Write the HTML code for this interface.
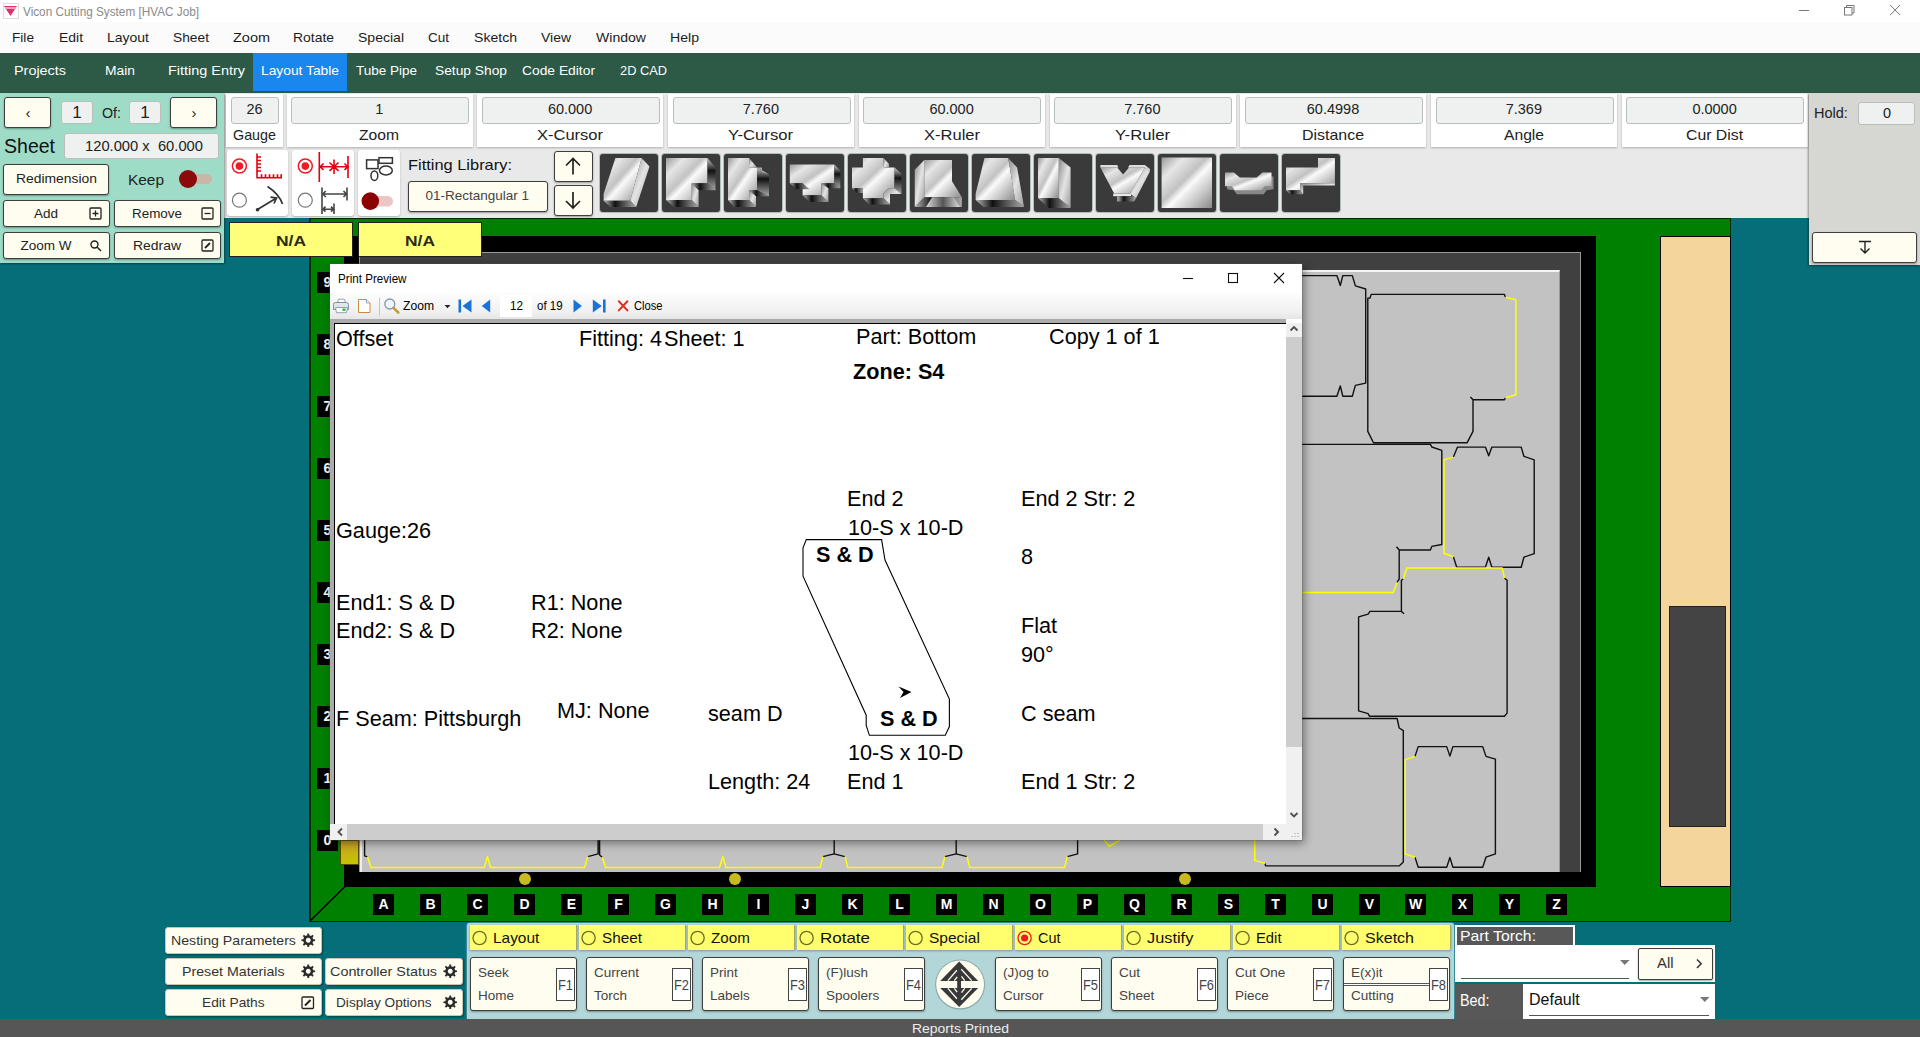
<!DOCTYPE html>
<html lang="en"><head><meta charset="utf-8"><title>Vicon Cutting System [HVAC Job]</title>
<style>
html,body{margin:0;padding:0}
body{width:1920px;height:1037px;position:relative;overflow:hidden;background:#056e78;font-family:"Liberation Sans",sans-serif;color:#222}
div,span.t,svg{position:absolute;box-sizing:border-box}
span.t{white-space:pre;transform-origin:0 50%}
.btn{background:#fffdf0;border:1px solid #3e3e3e;border-radius:3px;box-shadow:0 1px 2px rgba(0,0,0,.35)}
.b2{border-color:#c9c6b4;box-shadow:1px 1px 2px rgba(0,0,0,.4)}
.val{background:#eef1f0;border:1px solid #b9bfbd;border-radius:3px}
.wp{background:#fff;box-shadow:0 1px 2px rgba(0,0,0,.25)}
.fit{background:#3a3a3a;border-radius:3px;box-shadow:0 0 0 1px rgba(150,170,165,.7)}
.lbl{background:#000}
.yl{background:#ffff66}

</style></head>
<body>
<div style="left:0px;top:0px;width:1920px;height:22px;background:#fff"></div>
<svg style="left:3px;top:3px" width="16" height="16" viewBox="0 0 16 16"><rect x="0.5" y="0.5" width="15" height="15" fill="#fff" stroke="#ddd"/><path d="M1 3h13l-6.5 10z" fill="#e0306a"/><rect x="2" y="4" width="11" height="2" fill="#f7a0bd"/></svg>
<span class="t" style="left:23.0px;top:5.0px;font-size:12px;line-height:14px;transform:scaleX(0.980);color:#8a8a8a;">Vicon Cutting System [HVAC Job]</span>
<svg style="left:1790px;top:0" width="130" height="22" viewBox="0 0 130 22" fill="none" stroke="#777" stroke-width="1"><path d="M9 10.500h10"/><rect x="54.500" y="7.500" width="7.500" height="7.500"/><path d="M56.500 7.500v-2h7.500v7.500h-2"/><path d="M100.200 5l9.800 10M110 5l-9.800 10"/></svg>
<div style="left:0px;top:22px;width:1920px;height:31px;background:#fbfbfb"></div>
<span class="t" style="left:12.0px;top:29.8px;font-size:13.5px;line-height:16px;transform:scaleX(1.011);color:#1c1c1c;">File</span>
<span class="t" style="left:59.0px;top:29.8px;font-size:13.5px;line-height:16px;transform:scaleX(1.032);color:#1c1c1c;">Edit</span>
<span class="t" style="left:107.0px;top:29.8px;font-size:13.5px;line-height:16px;transform:scaleX(1.036);color:#1c1c1c;">Layout</span>
<span class="t" style="left:173.0px;top:29.8px;font-size:13.5px;line-height:16px;transform:scaleX(1.020);color:#1c1c1c;">Sheet</span>
<span class="t" style="left:233.0px;top:29.8px;font-size:13.5px;line-height:16px;transform:scaleX(1.072);color:#1c1c1c;">Zoom</span>
<span class="t" style="left:293.0px;top:29.8px;font-size:13.5px;line-height:16px;transform:scaleX(1.031);color:#1c1c1c;">Rotate</span>
<span class="t" style="left:358.0px;top:29.8px;font-size:13.5px;line-height:16px;transform:scaleX(1.039);color:#1c1c1c;">Special</span>
<span class="t" style="left:428.0px;top:29.8px;font-size:13.5px;line-height:16px;color:#1c1c1c;">Cut</span>
<span class="t" style="left:474.0px;top:29.8px;font-size:13.5px;line-height:16px;transform:scaleX(1.042);color:#1c1c1c;">Sketch</span>
<span class="t" style="left:541.0px;top:29.8px;font-size:13.5px;line-height:16px;transform:scaleX(1.034);color:#1c1c1c;">View</span>
<span class="t" style="left:596.0px;top:29.8px;font-size:13.5px;line-height:16px;transform:scaleX(1.041);color:#1c1c1c;">Window</span>
<span class="t" style="left:670.0px;top:29.8px;font-size:13.5px;line-height:16px;transform:scaleX(1.045);color:#1c1c1c;">Help</span>
<div style="left:0px;top:53px;width:1920px;height:40px;background:#2d5947"></div>
<div style="left:253px;top:53px;width:94px;height:38px;background:#1a87ee"></div>
<span class="t" style="left:14.0px;top:63.2px;font-size:13.5px;line-height:16px;transform:scaleX(1.066);color:#fff;">Projects</span>
<span class="t" style="left:105.0px;top:63.2px;font-size:13.5px;line-height:16px;transform:scaleX(1.025);color:#fff;">Main</span>
<span class="t" style="left:168.0px;top:63.2px;font-size:13.5px;line-height:16px;transform:scaleX(1.069);color:#fff;">Fitting Entry</span>
<span class="t" style="left:261.0px;top:63.2px;font-size:13.5px;line-height:16px;transform:scaleX(1.022);color:#fff;">Layout Table</span>
<span class="t" style="left:356.0px;top:63.2px;font-size:13.5px;line-height:16px;color:#fff;">Tube Pipe</span>
<span class="t" style="left:435.0px;top:63.2px;font-size:13.5px;line-height:16px;transform:scaleX(1.020);color:#fff;">Setup Shop</span>
<span class="t" style="left:522.0px;top:63.2px;font-size:13.5px;line-height:16px;transform:scaleX(1.024);color:#fff;">Code Editor</span>
<span class="t" style="left:620.0px;top:63.2px;font-size:13.5px;line-height:16px;transform:scaleX(0.949);color:#fff;">2D CAD</span>
<div style="left:223px;top:93px;width:1587px;height:125px;background:#e9e9e9"></div>
<div style="left:0px;top:93px;width:224px;height:170px;background:#9edcc8;box-shadow:1px 1px 2px rgba(0,0,0,.4)"></div>
<div class="btn" style="left:4px;top:97px;width:47px;height:31px;"></div>
<span class="t" style="left:25.5px;top:104.0px;font-size:15px;line-height:18px;">‹</span>
<div class="btn" style="left:170px;top:97px;width:47px;height:31px;"></div>
<span class="t" style="left:191.5px;top:104.0px;font-size:15px;line-height:18px;">›</span>
<div class="val" style="left:61px;top:101px;width:32px;height:23px;"></div>
<span class="t" style="left:72.3px;top:103.0px;font-size:17px;line-height:20px;">1</span>
<div class="val" style="left:129px;top:101px;width:32px;height:23px;"></div>
<span class="t" style="left:140.3px;top:103.0px;font-size:17px;line-height:20px;">1</span>
<span class="t" style="left:102.0px;top:104.5px;font-size:14.5px;line-height:17px;transform:scaleX(0.983);">Of:</span>
<span class="t" style="left:4.0px;top:134.0px;font-size:20px;line-height:24px;transform:scaleX(0.976);color:#111;">Sheet</span>
<div class="val" style="left:64px;top:133px;width:155px;height:26px;"></div>
<span class="t" style="left:85.0px;top:137.5px;font-size:14.5px;line-height:17px;transform:scaleX(1.016);">120.000 x  60.000</span>
<div class="btn" style="left:3px;top:164px;width:106px;height:31px;"></div>
<span class="t" style="left:15.5px;top:171.0px;font-size:13.5px;line-height:16px;transform:scaleX(1.028);">Redimension</span>
<span class="t" style="left:128.0px;top:171.0px;font-size:15px;line-height:18px;transform:scaleX(1.028);">Keep</span>
<div style="left:191px;top:174px;width:21px;height:10px;background:#c9b6a6;border-radius:5px"></div>
<div style="left:179px;top:170px;width:18px;height:18px;background:#8b0a0a;border-radius:9px"></div>
<div class="btn" style="left:3px;top:200px;width:107px;height:27px;"></div>
<span class="t" style="left:34.0px;top:206.0px;font-size:13.5px;line-height:16px;">Add</span>
<div class="btn" style="left:114px;top:200px;width:107px;height:27px;"></div>
<span class="t" style="left:132.0px;top:206.0px;font-size:13.5px;line-height:16px;transform:scaleX(0.995);">Remove</span>
<div class="btn" style="left:3px;top:232px;width:107px;height:27px;"></div>
<span class="t" style="left:20.5px;top:238.0px;font-size:13.5px;line-height:16px;">Zoom W</span>
<div class="btn" style="left:114px;top:232px;width:107px;height:27px;"></div>
<span class="t" style="left:133.0px;top:238.0px;font-size:13.5px;line-height:16px;transform:scaleX(1.032);">Redraw</span>
<svg style="left:88px;top:206px" width="16" height="16" fill="none" stroke="#222" stroke-width="1.3"><rect x="2" y="2" width="11" height="11" rx="1"/><path d="M7.5 4.5v6M4.5 7.5h6"/></svg>
<svg style="left:200px;top:206px" width="16" height="16" fill="none" stroke="#222" stroke-width="1.3"><rect x="2" y="2" width="11" height="11" rx="1"/><path d="M4.5 7.5h6"/></svg>
<svg style="left:88px;top:238px" width="16" height="16" fill="none" stroke="#222" stroke-width="1.4"><circle cx="6.5" cy="6.5" r="3.5"/><path d="M9 9l4 4"/></svg>
<svg style="left:200px;top:238px" width="16" height="16" fill="none" stroke="#222" stroke-width="1.3"><rect x="2" y="2" width="11" height="11" rx="1"/><path d="M5 10l5-5" stroke-width="1.8"/></svg>
<div class="wp" style="left:226px;top:94px;width:57px;height:52.5px;"></div>
<div class="val" style="left:230.5px;top:97px;width:48px;height:26.5px;"></div>
<span class="t" style="left:246.4px;top:101.1px;font-size:14.5px;line-height:17px;">26</span>
<span class="t" style="left:233.0px;top:126.5px;font-size:14.5px;line-height:17px;transform:scaleX(0.988);">Gauge</span>
<div class="wp" style="left:286.5px;top:94px;width:186px;height:52.5px;"></div>
<div class="val" style="left:291.0px;top:97px;width:178px;height:26.5px;"></div>
<span class="t" style="left:375.3px;top:101.1px;font-size:14.5px;line-height:17px;">1</span>
<span class="t" style="left:359.3px;top:126.5px;font-size:14.5px;line-height:17px;transform:scaleX(1.079);">Zoom</span>
<div class="wp" style="left:477.0px;top:94px;width:186px;height:52.5px;"></div>
<div class="val" style="left:481.5px;top:97px;width:178px;height:26.5px;"></div>
<span class="t" style="left:547.9px;top:101.1px;font-size:14.5px;line-height:17px;">60.000</span>
<span class="t" style="left:537.0px;top:126.5px;font-size:14.5px;line-height:17px;transform:scaleX(1.138);">X-Cursor</span>
<div class="wp" style="left:668.0px;top:94px;width:186px;height:52.5px;"></div>
<div class="val" style="left:672.5px;top:97px;width:178px;height:26.5px;"></div>
<span class="t" style="left:742.7px;top:101.1px;font-size:14.5px;line-height:17px;">7.760</span>
<span class="t" style="left:728.3px;top:126.5px;font-size:14.5px;line-height:17px;transform:scaleX(1.147);">Y-Cursor</span>
<div class="wp" style="left:858.5px;top:94px;width:186px;height:52.5px;"></div>
<div class="val" style="left:863.0px;top:97px;width:178px;height:26.5px;"></div>
<span class="t" style="left:929.4px;top:101.1px;font-size:14.5px;line-height:17px;">60.000</span>
<span class="t" style="left:923.5px;top:126.5px;font-size:14.5px;line-height:17px;transform:scaleX(1.139);">X-Ruler</span>
<div class="wp" style="left:1049.5px;top:94px;width:186px;height:52.5px;"></div>
<div class="val" style="left:1054.0px;top:97px;width:178px;height:26.5px;"></div>
<span class="t" style="left:1124.2px;top:101.1px;font-size:14.5px;line-height:17px;">7.760</span>
<span class="t" style="left:1114.8px;top:126.5px;font-size:14.5px;line-height:17px;transform:scaleX(1.150);">Y-Ruler</span>
<div class="wp" style="left:1240.0px;top:94px;width:186px;height:52.5px;"></div>
<div class="val" style="left:1244.5px;top:97px;width:178px;height:26.5px;"></div>
<span class="t" style="left:1306.8px;top:101.1px;font-size:14.5px;line-height:17px;">60.4998</span>
<span class="t" style="left:1302.0px;top:126.5px;font-size:14.5px;line-height:17px;transform:scaleX(1.099);">Distance</span>
<div class="wp" style="left:1431.0px;top:94px;width:186px;height:52.5px;"></div>
<div class="val" style="left:1435.5px;top:97px;width:178px;height:26.5px;"></div>
<span class="t" style="left:1505.7px;top:101.1px;font-size:14.5px;line-height:17px;">7.369</span>
<span class="t" style="left:1503.8px;top:126.5px;font-size:14.5px;line-height:17px;transform:scaleX(1.079);">Angle</span>
<div class="wp" style="left:1621.5px;top:94px;width:186px;height:52.5px;"></div>
<div class="val" style="left:1626.0px;top:97px;width:178px;height:26.5px;"></div>
<span class="t" style="left:1692.4px;top:101.1px;font-size:14.5px;line-height:17px;">0.0000</span>
<span class="t" style="left:1686.0px;top:126.5px;font-size:14.5px;line-height:17px;transform:scaleX(1.089);">Cur Dist</span>
<div style="left:1809px;top:93px;width:111px;height:172px;background:#d6d6d3;box-shadow:-1px 1px 2px rgba(0,0,0,.4)"></div>
<span class="t" style="left:1814.0px;top:104.5px;font-size:14.5px;line-height:17px;">Hold:</span>
<div class="val" style="left:1858px;top:102px;width:57px;height:23px;"></div>
<span class="t" style="left:1883.0px;top:104.5px;font-size:14.5px;line-height:17px;">0</span>
<div class="btn" style="left:1812px;top:232px;width:105px;height:31px;"></div>
<svg style="left:1856px;top:239px" width="18" height="18" fill="none" stroke="#222" stroke-width="1.4"><path d="M3 2.5h12M9 2.5v11M4.5 9.5l4.5 4.5 4.5-4.5"/></svg>
<div class="wp" style="left:227px;top:150px;width:61px;height:66px;border-radius:3px"></div>
<div class="wp" style="left:292px;top:150px;width:62px;height:66px;border-radius:3px"></div>
<div class="wp" style="left:358px;top:150px;width:42px;height:66px;border-radius:3px"></div>
<svg style="left:224px;top:148px" width="180" height="72" viewBox="0 0 180 72" fill="none">
<g stroke="#ed1c24" stroke-width="1.5"><circle cx="15.4" cy="18.1" r="7"/><circle cx="81.3" cy="18.1" r="7"/></g>
<circle cx="15.4" cy="18.1" r="3.8" fill="#ed1c24"/><circle cx="81.3" cy="18.1" r="3.8" fill="#ed1c24"/>
<g stroke="#777" stroke-width="1.2"><circle cx="15.4" cy="52.2" r="7"/><circle cx="81.3" cy="52.2" r="7"/></g>
<g stroke="#e3000f" stroke-width="1.6"><path d="M33 5.5V30.5M32.2 29.7H58"/><path d="M33 9h4M33 12.5h4M33 16h4M33 19.5h4M33 23h4M37.5 29.7v-3.5M41.5 29.7v-3.5M45.5 29.7v-3.5M49.5 29.7v-3.5M53.5 29.7v-3.5M57.2 29.7v-3.5" stroke-width="1.7"/></g>
<g stroke="#333" stroke-width="1.7"><path d="M43.5 38.5Q55 46 58.5 56"/><path d="M33.5 61.5L52.5 50M46.5 49.2l6 .8-2.5 5.5"/></g><circle cx="33.5" cy="61.8" r="1.8" fill="#333"/>
<g stroke="#e3000f" stroke-width="1.6"><path d="M95.3 4v30M124 8v22"/><path d="M96 18.7h28M99.5 15.5l-3.3 3.2 3.3 3.2M120.5 15.5l3.3 3.2-3.3 3.2M110 11.5v14.5M105.5 14.5l9 8.4M114.5 14.5l-9 8.4" stroke-width="1.6"/></g>
<g stroke="#444" stroke-width="1.6"><path d="M98 39.5V66M123 39.5v13M110 55.5V66"/><path d="M98.5 46h24M101.8 43l-3 3 3 3M119.5 43l3 3-3 3M98.5 61.2h11M101.5 58.7l-2.6 2.5 2.6 2.5M107 58.7l2.6 2.5-2.6 2.5" stroke-width="1.6"/></g>
<g stroke="#333" stroke-width="1.5"><rect x="142.6" y="11.9" width="11.4" height="8.7"/><rect x="155" y="9.7" width="13.4" height="5.6"/><ellipse cx="161.9" cy="22.5" rx="6.4" ry="4.4"/><ellipse cx="150.4" cy="27.7" rx="3.4" ry="4.8"/></g>
<rect x="146" y="48" width="23" height="10.5" rx="5.2" fill="#ecc5c5"/><circle cx="146.3" cy="53.1" r="8.8" fill="#8b0000"/>
</svg>
<span class="t" style="left:408.0px;top:156.0px;font-size:15px;line-height:18px;transform:scaleX(1.094);color:#111;">Fitting Library:</span>
<div class="btn" style="left:408px;top:180.5px;width:139.5px;height:31px;"></div>
<span class="t" style="left:425.5px;top:188.0px;font-size:13.5px;line-height:16px;color:#444;">01-Rectangular 1</span>
<div class="btn" style="left:553.5px;top:150.5px;width:39px;height:31px;"></div>
<div class="btn" style="left:553.5px;top:184.5px;width:39px;height:31px;"></div>
<svg style="left:554px;top:152px" width="38" height="62" fill="none" stroke="#222" stroke-width="1.7"><path d="M19 6.500v16M12 13.500l7-7 7 7M19 40v16M12 49l7 7 7-7"/></svg>
<svg width="0" height="0"><defs>
<linearGradient id="gm" x1="0" y1="0" x2="1" y2="1"><stop offset="0" stop-color="#9a9a9a"/><stop offset=".22" stop-color="#e6e6e6"/><stop offset=".45" stop-color="#c2c2c2"/><stop offset=".55" stop-color="#fafafa"/><stop offset=".72" stop-color="#d0d0d0"/><stop offset="1" stop-color="#8a8a8a"/></linearGradient>
<linearGradient id="gs" x1="0" y1="0" x2="1" y2="1"><stop offset="0" stop-color="#8a8a8a"/><stop offset=".5" stop-color="#e4e4e4"/><stop offset="1" stop-color="#9a9a9a"/></linearGradient>
<linearGradient id="gs2" x1="0" y1="0" x2="1" y2="0"><stop offset="0" stop-color="#ddd"/><stop offset=".5" stop-color="#555"/><stop offset="1" stop-color="#ddd"/></linearGradient>
<linearGradient id="gd" x1="0" y1="0" x2="1" y2="0"><stop offset="0" stop-color="#bbb"/><stop offset=".35" stop-color="#111"/><stop offset="1" stop-color="#aaa"/></linearGradient>
<linearGradient id="gd2" x1="0" y1="0" x2="0" y2="1"><stop offset="0" stop-color="#ccc"/><stop offset=".4" stop-color="#111"/><stop offset="1" stop-color="#aaa"/></linearGradient>
</defs></svg>
<div class="fit" style="left:600px;top:154px;width:58px;height:58px;"></div>
<svg style="left:600px;top:154px" width="58" height="58" viewBox="0 0 58 58"><polygon points="15.4,4 41.6,4 30.3,46.7 3.6,46.7 3.6,40" fill="url(#gm)"/><polygon points="41.6,4 49.5,12.5 36.2,53 30.3,46.7" fill="url(#gs)"/><polygon points="3.6,46.7 30.3,46.7 36.2,53 10.5,53" fill="url(#gd)"/></svg>
<div class="fit" style="left:662px;top:154px;width:58px;height:58px;"></div>
<svg style="left:662px;top:154px" width="58" height="58" viewBox="0 0 58 58"><polygon points="4,4 45.5,4 45.5,29.3 29.7,29.3 29.7,46.1 4,46.1" fill="url(#gm)"/><polygon points="45.5,4 53.5,13.5 53.5,36.2 45.5,29.3" fill="url(#gd2)"/><polygon points="29.7,29.3 45.5,29.3 53.5,36.2 36.6,36.2" fill="url(#gd)"/><polygon points="29.7,29.3 36.6,36.2 36.6,53 29.7,46.1" fill="url(#gs)"/><polygon points="4,46.1 29.7,46.1 36.6,53 11.9,53" fill="url(#gd)"/></svg>
<div class="fit" style="left:724px;top:154px;width:58px;height:58px;"></div>
<svg style="left:724px;top:154px" width="58" height="58" viewBox="0 0 58 58"><polygon points="4,4 25.1,4 25.1,13.5 33.1,13.5 33.1,36.2 25.1,36.2 25.1,46.1 4,46.1" fill="url(#gm)"/><polygon points="25.1,4 33,13.5 25.1,13.5" fill="url(#gs)"/><polygon points="33.1,13.5 45,20.4 45,42.2 33.1,36.2" fill="url(#gd2)"/><polygon points="33.1,13.5 38,13.5 38,18 45,20.4" fill="#aaa"/><polygon points="25.1,36.2 33.1,36.2 45,42.2 32,42.2" fill="url(#gd)"/><polygon points="25.1,36.2 32,42.2 32,53 25.1,46.1" fill="url(#gs)"/><polygon points="4,46.1 25.1,46.1 32,53 10,53" fill="url(#gd)"/></svg>
<div class="fit" style="left:786px;top:154px;width:58px;height:58px;"></div>
<svg style="left:786px;top:154px" width="58" height="58" viewBox="0 0 58 58"><polygon points="3.8,10.5 48.3,10.5 48.3,29.3 35.4,29.3 35.4,41.2 16.6,41.2 16.6,29.3 3.8,29.3" fill="url(#gm)"/><polygon points="48.3,10.5 54.3,16.4 54.3,34.3 48.3,29.3" fill="url(#gd2)"/><polygon points="3.8,29.3 16.6,29.3 23.6,35.2 10.7,35.2" fill="url(#gd)"/><polygon points="35.4,29.3 48.3,29.3 54.3,34.3 42.4,34.3" fill="url(#gd)"/><polygon points="35.4,29.3 42.4,34.3 42.4,48.1 35.4,41.2" fill="url(#gs)"/><polygon points="16.6,41.2 35.4,41.2 42.4,48.1 23.6,48.1" fill="url(#gd)"/></svg>
<div class="fit" style="left:848px;top:154px;width:58px;height:58px;"></div>
<svg style="left:848px;top:154px" width="58" height="58" viewBox="0 0 58 58"><polygon points="14.9,4 35.6,4 35.6,13.5 46.5,13.5 46.5,34.3 40.5,34.3 35.6,39 35.6,44.2 14.9,44.2 14.9,34.3 4,34.3 4,13.5 14.9,13.5" fill="url(#gm)"/><polygon points="35.6,4 41,10 41,13.5 35.6,13.5" fill="url(#gs)"/><polygon points="46.5,13.5 53.5,19.8 53.5,40 46.5,34.3" fill="url(#gd2)"/><polygon points="40.5,34.3 46.5,34.3 53.5,40 42,40 42,50.5 35.6,44.2 35.6,39" fill="url(#gs)"/><polygon points="14.9,44.2 35.6,44.2 42,50.5 21,50.5" fill="url(#gd)"/><polygon points="4,34.3 14.9,34.3 14.9,39 9,39" fill="url(#gd)"/></svg>
<div class="fit" style="left:910px;top:154px;width:58px;height:58px;"></div>
<svg style="left:910px;top:154px" width="58" height="58" viewBox="0 0 58 58"><polygon points="14.3,6 42,6 42,27.3 51.9,43.2 14.3,43.2" fill="url(#gm)"/><polygon points="4.75,15.8 14.3,6 14.3,43.2 4.75,53" fill="url(#gs)"/><polygon points="4.75,53 14.3,43.2 51.9,43.2 51.9,53" fill="url(#gd)"/><polygon points="22,43.2 44,43.2 50,53 16,53" fill="url(#gs2)"/></svg>
<div class="fit" style="left:972px;top:154px;width:58px;height:58px;"></div>
<svg style="left:972px;top:154px" width="58" height="58" viewBox="0 0 58 58"><polygon points="12.5,4 36.2,4 43.2,46.1 3.6,46.1 3.6,40" fill="url(#gm)"/><polygon points="36.2,4 45.1,13.5 52.1,53 43.2,46.1" fill="url(#gs)"/><polygon points="3.6,46.1 43.2,46.1 52.1,53 11.5,53" fill="url(#gd)"/></svg>
<div class="fit" style="left:1034px;top:154px;width:58px;height:58px;"></div>
<svg style="left:1034px;top:154px" width="58" height="58" viewBox="0 0 58 58"><polygon points="4,4 24.8,4 24.8,44.2 4,44.2" fill="url(#gm)"/><polygon points="24.8,4 36.6,13.5 36.6,54 24.8,44.2" fill="url(#gs)"/><polygon points="4,44.2 24.8,44.2 36.6,54 14.9,54" fill="url(#gd)"/></svg>
<div class="fit" style="left:1096px;top:154px;width:58px;height:58px;"></div>
<svg style="left:1096px;top:154px" width="58" height="58" viewBox="0 0 58 58"><polygon points="4.4,13.5 21.2,13.5 27.1,20.4 33.1,13.5 48.9,13.5 34.1,39.6 18.2,39.6" fill="url(#gm)"/><polygon points="4.4,11 21.2,11 22.5,13.5 4.4,13.5" fill="#ddd"/><polygon points="32,13.5 33.5,11 48.9,11 53.9,15 53.9,17.4 48.9,13.5" fill="#ddd"/><polygon points="48.9,13.5 53.9,17.4 40,44.2 34.1,39.6" fill="url(#gs)"/><polygon points="17.2,39.6 35,39.6 35,42.2 17.2,42.2" fill="#e8e8e8"/><polygon points="21.2,42.2 38,42.2 40,44.2 38,47.5 21.2,47.5" fill="url(#gd)"/></svg>
<div class="fit" style="left:1158px;top:154px;width:58px;height:58px;"></div>
<svg style="left:1158px;top:154px" width="58" height="58" viewBox="0 0 58 58"><polygon points="3.6,3.6 54,3.6 54,54 3.6,54" fill="url(#gm)"/></svg>
<div class="fit" style="left:1220px;top:154px;width:58px;height:58px;"></div>
<svg style="left:1220px;top:154px" width="58" height="58" viewBox="0 0 58 58"><polygon points="7,22.4 15.9,22.4 21.8,27.4 38.6,27.4 44.6,22.4 53.5,22.4 53.5,35.3 46.6,36.3 43.6,40.2 16.9,40.2 13.9,36.3 7,35.3" fill="#888"/><polygon points="5,18.4 13.9,18.4 19.8,23.4 36.6,23.4 42.6,18.4 51.5,18.4 51.5,32.3 44.6,32.3 41.6,36.2 14.9,36.2 11.9,32.3 5,32.3" fill="url(#gm)"/></svg>
<div class="fit" style="left:1282px;top:154px;width:58px;height:58px;"></div>
<svg style="left:1282px;top:154px" width="58" height="58" viewBox="0 0 58 58"><polygon points="36,4 52.9,4 52.9,29.3 18.2,29.3 18.2,36.2 4,36.2 4,13.5 36,13.5" fill="url(#gm)"/><polygon points="18.2,29.3 52.9,29.3 52.9,31.5 21.2,31.5 21.2,40.2 18.2,36.2" fill="url(#gs)"/><polygon points="4,36.2 18.2,36.2 21.2,40.2 7.5,40.2" fill="url(#gd)"/></svg>
<div style="left:309px;top:218px;width:1422px;height:704px;background:#008000;border:1px solid #002a00;border-left-width:2px"></div>
<svg style="left:309px;top:884px" width="40" height="40"><path d="M1.5 36.5L36 2.5" stroke="#000" stroke-width="1.6"/></svg>
<div style="left:344px;top:236px;width:1252px;height:651px;background:#000"></div>
<div style="left:359px;top:252px;width:1222px;height:620px;background:#404040;border:1px solid #9a9a9a;border-bottom:none"></div>
<div style="left:360px;top:270px;width:1200px;height:602px;background:#c2c2c2;border-top:2px solid #f4f4f4;border-left:2px solid #eee;border-right:1px solid #999"></div>
<div style="left:1660px;top:236px;width:71px;height:651px;background:#f4d69c;border:1px solid #000"></div>
<div style="left:1669px;top:606px;width:57px;height:221px;background:#444;border:1px solid #222"></div>
<div style="left:228.5px;top:222px;width:124.5px;height:35px;background:#ffff7a;border:1px solid #222"></div>
<span class="t" style="left:275.7px;top:231.6px;font-size:15px;line-height:18px;transform:scaleX(1.161);color:#2a2a10;font-weight:bold;">N/A</span>
<div style="left:357.5px;top:222px;width:124.5px;height:35px;background:#ffff7a;border:1px solid #222"></div>
<span class="t" style="left:404.7px;top:231.6px;font-size:15px;line-height:18px;transform:scaleX(1.161);color:#2a2a10;font-weight:bold;">N/A</span>
<div class="lbl" style="left:317px;top:272px;width:21px;height:21px;"></div>
<span class="t" style="left:323.6px;top:274.0px;font-size:14px;line-height:17px;color:#fff;font-weight:bold;">9</span>
<div class="lbl" style="left:317px;top:334px;width:21px;height:21px;"></div>
<span class="t" style="left:323.6px;top:336.0px;font-size:14px;line-height:17px;color:#fff;font-weight:bold;">8</span>
<div class="lbl" style="left:317px;top:396px;width:21px;height:21px;"></div>
<span class="t" style="left:323.6px;top:398.0px;font-size:14px;line-height:17px;color:#fff;font-weight:bold;">7</span>
<div class="lbl" style="left:317px;top:458px;width:21px;height:21px;"></div>
<span class="t" style="left:323.6px;top:460.0px;font-size:14px;line-height:17px;color:#fff;font-weight:bold;">6</span>
<div class="lbl" style="left:317px;top:520px;width:21px;height:21px;"></div>
<span class="t" style="left:323.6px;top:522.0px;font-size:14px;line-height:17px;color:#fff;font-weight:bold;">5</span>
<div class="lbl" style="left:317px;top:582px;width:21px;height:21px;"></div>
<span class="t" style="left:323.6px;top:584.0px;font-size:14px;line-height:17px;color:#fff;font-weight:bold;">4</span>
<div class="lbl" style="left:317px;top:644px;width:21px;height:21px;"></div>
<span class="t" style="left:323.6px;top:646.0px;font-size:14px;line-height:17px;color:#fff;font-weight:bold;">3</span>
<div class="lbl" style="left:317px;top:706px;width:21px;height:21px;"></div>
<span class="t" style="left:323.6px;top:708.0px;font-size:14px;line-height:17px;color:#fff;font-weight:bold;">2</span>
<div class="lbl" style="left:317px;top:768px;width:21px;height:21px;"></div>
<span class="t" style="left:323.6px;top:770.0px;font-size:14px;line-height:17px;color:#fff;font-weight:bold;">1</span>
<div class="lbl" style="left:317px;top:830px;width:21px;height:21px;"></div>
<span class="t" style="left:323.6px;top:832.0px;font-size:14px;line-height:17px;color:#fff;font-weight:bold;">0</span>
<div class="lbl" style="left:373px;top:893.5px;width:21px;height:21px;"></div>
<span class="t" style="left:378.4px;top:895.5px;font-size:14px;line-height:17px;color:#fff;font-weight:bold;">A</span>
<div class="lbl" style="left:420px;top:893.5px;width:21px;height:21px;"></div>
<span class="t" style="left:425.4px;top:895.5px;font-size:14px;line-height:17px;color:#fff;font-weight:bold;">B</span>
<div class="lbl" style="left:467px;top:893.5px;width:21px;height:21px;"></div>
<span class="t" style="left:472.4px;top:895.5px;font-size:14px;line-height:17px;color:#fff;font-weight:bold;">C</span>
<div class="lbl" style="left:514px;top:893.5px;width:21px;height:21px;"></div>
<span class="t" style="left:519.4px;top:895.5px;font-size:14px;line-height:17px;color:#fff;font-weight:bold;">D</span>
<div class="lbl" style="left:561px;top:893.5px;width:21px;height:21px;"></div>
<span class="t" style="left:566.8px;top:895.5px;font-size:14px;line-height:17px;color:#fff;font-weight:bold;">E</span>
<div class="lbl" style="left:608px;top:893.5px;width:21px;height:21px;"></div>
<span class="t" style="left:614.2px;top:895.5px;font-size:14px;line-height:17px;color:#fff;font-weight:bold;">F</span>
<div class="lbl" style="left:655px;top:893.5px;width:21px;height:21px;"></div>
<span class="t" style="left:660.1px;top:895.5px;font-size:14px;line-height:17px;color:#fff;font-weight:bold;">G</span>
<div class="lbl" style="left:702px;top:893.5px;width:21px;height:21px;"></div>
<span class="t" style="left:707.4px;top:895.5px;font-size:14px;line-height:17px;color:#fff;font-weight:bold;">H</span>
<div class="lbl" style="left:748px;top:893.5px;width:21px;height:21px;"></div>
<span class="t" style="left:756.6px;top:895.5px;font-size:14px;line-height:17px;color:#fff;font-weight:bold;">I</span>
<div class="lbl" style="left:795px;top:893.5px;width:21px;height:21px;"></div>
<span class="t" style="left:801.6px;top:895.5px;font-size:14px;line-height:17px;color:#fff;font-weight:bold;">J</span>
<div class="lbl" style="left:842px;top:893.5px;width:21px;height:21px;"></div>
<span class="t" style="left:847.4px;top:895.5px;font-size:14px;line-height:17px;color:#fff;font-weight:bold;">K</span>
<div class="lbl" style="left:889px;top:893.5px;width:21px;height:21px;"></div>
<span class="t" style="left:895.2px;top:895.5px;font-size:14px;line-height:17px;color:#fff;font-weight:bold;">L</span>
<div class="lbl" style="left:936px;top:893.5px;width:21px;height:21px;"></div>
<span class="t" style="left:940.7px;top:895.5px;font-size:14px;line-height:17px;color:#fff;font-weight:bold;">M</span>
<div class="lbl" style="left:983px;top:893.5px;width:21px;height:21px;"></div>
<span class="t" style="left:988.4px;top:895.5px;font-size:14px;line-height:17px;color:#fff;font-weight:bold;">N</span>
<div class="lbl" style="left:1030px;top:893.5px;width:21px;height:21px;"></div>
<span class="t" style="left:1035.1px;top:895.5px;font-size:14px;line-height:17px;color:#fff;font-weight:bold;">O</span>
<div class="lbl" style="left:1077px;top:893.5px;width:21px;height:21px;"></div>
<span class="t" style="left:1082.8px;top:895.5px;font-size:14px;line-height:17px;color:#fff;font-weight:bold;">P</span>
<div class="lbl" style="left:1124px;top:893.5px;width:21px;height:21px;"></div>
<span class="t" style="left:1129.1px;top:895.5px;font-size:14px;line-height:17px;color:#fff;font-weight:bold;">Q</span>
<div class="lbl" style="left:1171px;top:893.5px;width:21px;height:21px;"></div>
<span class="t" style="left:1176.4px;top:895.5px;font-size:14px;line-height:17px;color:#fff;font-weight:bold;">R</span>
<div class="lbl" style="left:1218px;top:893.5px;width:21px;height:21px;"></div>
<span class="t" style="left:1223.8px;top:895.5px;font-size:14px;line-height:17px;color:#fff;font-weight:bold;">S</span>
<div class="lbl" style="left:1265px;top:893.5px;width:21px;height:21px;"></div>
<span class="t" style="left:1271.2px;top:895.5px;font-size:14px;line-height:17px;color:#fff;font-weight:bold;">T</span>
<div class="lbl" style="left:1312px;top:893.5px;width:21px;height:21px;"></div>
<span class="t" style="left:1317.4px;top:895.5px;font-size:14px;line-height:17px;color:#fff;font-weight:bold;">U</span>
<div class="lbl" style="left:1359px;top:893.5px;width:21px;height:21px;"></div>
<span class="t" style="left:1364.8px;top:895.5px;font-size:14px;line-height:17px;color:#fff;font-weight:bold;">V</span>
<div class="lbl" style="left:1405px;top:893.5px;width:21px;height:21px;"></div>
<span class="t" style="left:1408.9px;top:895.5px;font-size:14px;line-height:17px;color:#fff;font-weight:bold;">W</span>
<div class="lbl" style="left:1452px;top:893.5px;width:21px;height:21px;"></div>
<span class="t" style="left:1457.8px;top:895.5px;font-size:14px;line-height:17px;color:#fff;font-weight:bold;">X</span>
<div class="lbl" style="left:1499px;top:893.5px;width:21px;height:21px;"></div>
<span class="t" style="left:1504.8px;top:895.5px;font-size:14px;line-height:17px;color:#fff;font-weight:bold;">Y</span>
<div class="lbl" style="left:1546px;top:893.5px;width:21px;height:21px;"></div>
<span class="t" style="left:1552.2px;top:895.5px;font-size:14px;line-height:17px;color:#fff;font-weight:bold;">Z</span>
<div style="left:340px;top:840px;width:19px;height:25px;background:linear-gradient(#c9a227,#c5c400);border:1px solid #5a4a00"></div>
<div style="left:519px;top:873px;width:12px;height:12px;background:#c9b81e;border-radius:6px"></div>
<div style="left:729px;top:873px;width:12px;height:12px;background:#c9b81e;border-radius:6px"></div>
<div style="left:1179px;top:873px;width:12px;height:12px;background:#c9b81e;border-radius:6px"></div>
<svg style="left:0;top:0" width="1920" height="1037" fill="none" stroke-linejoin="round"><path stroke="#111" stroke-width="1.4" d="M1300 275.6L1336.9 275.6L1340.3 285.5L1342.8 275.6L1352.3 275.6L1355.4 285.9L1365.7 289L1365.7 383.1L1355.4 385.4L1352.3 396.2L1342.8 396.2L1340.3 386L1336.9 396.2L1300 396.2 M1505.5 297.2L1504.3 294.4L1371.2 294.4L1370 298L1367.8 298.3L1367.8 431.4L1373.5 442.8L1467 442.8L1473 431.4L1473 399.8L1504.5 399.8L1505.5 397.8 M1470.4 397L1473 399.8 M1300 444.4L1430.4 444.4L1431.8 447L1441.8 450.4L1441.8 544.5L1431.8 546.4L1430.4 550L1399.2 550L1399.2 579L1397 582.4 M1396.5 546.8L1399.2 550 M1453.4 457.1L1457.5 447.1L1485.4 447.1L1488.7 455.8L1491.9 447.1L1521.2 447.1L1523.9 456.3L1534.2 459.8L1534.2 553.7L1523.9 557.2L1521.2 567.3L1491.9 567.3L1488.7 557.2L1485.4 567.3L1456.7 567.3L1453.4 556.7 M1504.4 578.1L1507.1 580.3L1507.1 713.1L1504.4 716.3L1369.4 716.3L1368.1 713.6L1358.6 710.9L1358.6 616.9L1368.1 614.1L1370 611.4L1401.4 611.4L1401.4 580.3L1403.3 578.9 M1401.4 611.4L1404.1 613.8 M1300 718.5L1397.1 718.5L1399.2 728L1403.3 730.7L1403.3 862L1399.2 865.9L1265.6 865.9L1265 863.4 M1415 756.4L1418.2 746.6L1446.7 746.6L1449.9 756.1L1452.9 746.6L1482.7 746.6L1486 756.4L1495.4 759.1L1495.4 853.9L1486 857.2L1482.7 867.2L1452.9 867.2L1449.9 857.5L1446.7 867.2L1418.2 867.2L1415 857.2 M364.6 838L364.6 855.8L367.5 856.8 M587.8 856.6L598.1 853.9L598.1 838 M599.6 838L599.6 855L602.2 857.2 M822.8 856.6L834.2 853.9L834.2 838 M834.2 853.9L845 856.6 M944.8 856.6L956.2 853.9L956.2 838 M956.2 853.9L967 856.6 M1067.3 856.6L1077.6 853.9L1077.6 838"/><path stroke="#ffff00" stroke-width="1.5" d="M1505.5 297.2L1515.9 299.8L1515.9 394.7L1505.5 397.8 M1300 592.5L1393.3 592.5L1397 582.4 M1453.4 457.1L1444 459.8L1444 553.2L1453.4 556.7 M1403.3 578.9L1406.8 568.1L1502.2 568.1L1504.4 578.1 M1415 756.4L1405.2 759.6L1405.2 853.9L1415 857.2 M1254.8 838L1254.8 860.4L1265 863.4 M1102.5 838L1109.3 846.3L1120 840 M367.5 856.8L371 867.5L484.3 867.5L487.5 856.6L490.5 867.5L584.6 867.5L587.8 856.6 M602.2 857.2L605.7 867.5L719.5 867.5L722.8 856.6L726 867.5L820.1 867.5L822.8 856.6 M845 856.6L847.8 867.5L942.1 867.5L944.8 856.6 M967 856.6L969.7 867.5L1064.6 867.5L1067.3 856.6"/></svg>
<div style="left:330px;top:264px;width:972px;height:576px;background:#fff;box-shadow:2px 3px 9px rgba(0,0,0,.45);outline:1px solid rgba(90,90,90,.3)"></div>
<span class="t" style="left:338.0px;top:272.0px;font-size:12px;line-height:14px;transform:scaleX(0.969);color:#000;">Print Preview</span>
<svg style="left:1170px;top:266px" width="130" height="26" fill="none" stroke="#111" stroke-width="1.1"><path d="M13 12.5h10"/><rect x="58.5" y="7.5" width="9" height="9"/><path d="M104 7l10 10M114 7l-10 10"/></svg>
<div style="left:330px;top:293px;width:972px;height:26px;background:linear-gradient(#fdfdfd,#f1f1f1 70%,#e6e6e6)"></div>
<div style="left:330px;top:319px;width:956px;height:5px;background:#ababab"></div>
<div style="left:330px;top:323px;width:5px;height:501px;background:#ababab"></div>
<div style="left:334px;top:323px;width:952px;height:501px;background:#fff;border-top:1px solid #000;border-left:1px solid #000"></div>
<svg style="left:330px;top:293px" width="340" height="26" viewBox="0 0 340 26">
<g><path d="M7.500 9.600l1-3.400h6l1 3.400z" fill="#fff" stroke="#8a96a8" stroke-width=".9"/><path d="M3.500 16.500v-5q0-2 2-2h11q2 0 2 2v5z" fill="#dfe6ee" stroke="#7a8698" stroke-width=".9"/><path d="M5.500 14.500h12l-1 5.200h-10z" fill="#fff" stroke="#8a96a8" stroke-width=".9"/><rect x="12.5" y="15.5" width="3" height="2.4" fill="#2fb52f"/></g>
<g><path d="M28.5 6.5h8l3.5 3.5v9.500h-11.500z" fill="#fff" stroke="#d18a3c" stroke-width="1"/><path d="M36.500 6.500v3.500h3.500" fill="#f3f3f3" stroke="#8a96a8" stroke-width=".8"/></g>
<path d="M49.500 4.500v18" stroke="#c4c4c4"/>
<g><circle cx="59.800" cy="11" r="5" fill="#eef5fb" stroke="#8c98a8" stroke-width="1.300"/><path d="M63.500 14.800l4.800 4.800" stroke="#c49a3a" stroke-width="2.600" stroke-linecap="round"/></g>
<path d="M114.500 12l3 3.200 3-3.200z" fill="#222"/>
<g fill="#1a73d8"><rect x="128.500" y="6.500" width="2.600" height="13"/><path d="M141.500 6.500v13l-9-6.500z"/><path d="M160.200 6.500v13l-8.400-6.500z"/><path d="M243.500 6.500v13l8.400-6.500z"/><path d="M262.800 6.500v13l9-6.500z"/><rect x="273" y="6.500" width="2.600" height="13"/></g>
<rect x="170" y="2" width="32" height="22" fill="#fff"/>
<path d="M288.800 8.200l8.600 9.200M297.400 8.200l-8.600 9.200" stroke="#e0311f" stroke-width="2" stroke-linecap="round"/>
</svg>
<span class="t" style="left:403.4px;top:299.0px;font-size:12px;line-height:14px;transform:scaleX(1.011);color:#000;">Zoom</span>
<span class="t" style="left:509.5px;top:299.0px;font-size:12px;line-height:14px;transform:scaleX(0.974);color:#000;">12</span>
<span class="t" style="left:536.6px;top:299.0px;font-size:12px;line-height:14px;transform:scaleX(0.956);color:#000;">of 19</span>
<span class="t" style="left:633.8px;top:299.0px;font-size:12px;line-height:14px;transform:scaleX(0.929);color:#000;">Close</span>
<div style="left:1286px;top:323px;width:16px;height:501px;background:#f0f0f0"></div>
<div style="left:1286px;top:337px;width:16px;height:410px;background:#cdcdcd"></div>
<div style="left:330px;top:824px;width:956px;height:16px;background:#f0f0f0"></div>
<div style="left:347px;top:824px;width:916px;height:16px;background:#cdcdcd"></div>
<div style="left:1286px;top:824px;width:16px;height:16px;background:#f0f0f0"></div>
<svg style="left:1286px;top:323px" width="16" height="501" fill="none" stroke="#505050" stroke-width="1.9"><path d="M4.500 7.500l3.500-3.500 3.500 3.500M4.500 490l3.500 3.500 3.500-3.500"/></svg>
<svg style="left:330px;top:824px" width="972" height="16" fill="none" stroke="#505050" stroke-width="1.9"><path d="M12 4.500l-3.500 3.500 3.500 3.500M944.500 4.500l3.500 3.500-3.500 3.500"/><path d="M968 9v1M968 12v1M965 12v1M962 12v1M965 9v1" stroke="#bbb" stroke-width="1.600"/></svg>
<span class="t" style="left:336.0px;top:325.5px;font-size:21.33px;line-height:26px;transform:scaleX(1.015);color:#000;">Offset</span>
<span class="t" style="left:579.0px;top:325.5px;font-size:21.33px;line-height:26px;transform:scaleX(1.015);color:#000;">Fitting: 4</span>
<span class="t" style="left:664.4px;top:325.5px;font-size:21.33px;line-height:26px;transform:scaleX(1.015);color:#000;">Sheet: 1</span>
<span class="t" style="left:855.9px;top:323.6px;font-size:21.33px;line-height:26px;transform:scaleX(1.015);color:#000;">Part: Bottom</span>
<span class="t" style="left:1049.4px;top:323.6px;font-size:21.33px;line-height:26px;transform:scaleX(1.015);color:#000;">Copy 1 of 1</span>
<span class="t" style="left:853.3px;top:358.8px;font-size:21.33px;line-height:26px;transform:scaleX(1.015);color:#000;font-weight:bold;">Zone: S4</span>
<span class="t" style="left:846.8px;top:486.0px;font-size:21.33px;line-height:26px;transform:scaleX(1.015);color:#000;">End 2</span>
<span class="t" style="left:1020.5px;top:486.0px;font-size:21.33px;line-height:26px;transform:scaleX(1.015);color:#000;">End 2 Str: 2</span>
<span class="t" style="left:847.5px;top:515.3px;font-size:21.33px;line-height:26px;transform:scaleX(1.015);color:#000;">10-S x 10-D</span>
<span class="t" style="left:816.0px;top:542.4px;font-size:21.33px;line-height:26px;transform:scaleX(1.015);color:#000;font-weight:bold;">S &amp; D</span>
<span class="t" style="left:1020.5px;top:543.8px;font-size:21.33px;line-height:26px;transform:scaleX(1.015);color:#000;">8</span>
<span class="t" style="left:336.0px;top:517.8px;font-size:21.33px;line-height:26px;transform:scaleX(1.015);color:#000;">Gauge:26</span>
<span class="t" style="left:335.8px;top:589.8px;font-size:21.33px;line-height:26px;transform:scaleX(1.015);color:#000;">End1: S &amp; D</span>
<span class="t" style="left:531.0px;top:589.8px;font-size:21.33px;line-height:26px;transform:scaleX(1.015);color:#000;">R1: None</span>
<span class="t" style="left:335.8px;top:618.0px;font-size:21.33px;line-height:26px;transform:scaleX(1.015);color:#000;">End2: S &amp; D</span>
<span class="t" style="left:531.0px;top:618.0px;font-size:21.33px;line-height:26px;transform:scaleX(1.015);color:#000;">R2: None</span>
<span class="t" style="left:1020.5px;top:613.4px;font-size:21.33px;line-height:26px;transform:scaleX(1.015);color:#000;">Flat</span>
<span class="t" style="left:1020.5px;top:641.9px;font-size:21.33px;line-height:26px;transform:scaleX(1.015);color:#000;">90°</span>
<span class="t" style="left:335.8px;top:705.6px;font-size:21.33px;line-height:26px;transform:scaleX(1.015);color:#000;">F Seam: Pittsburgh</span>
<span class="t" style="left:557.3px;top:698.3px;font-size:21.33px;line-height:26px;transform:scaleX(1.015);color:#000;">MJ: None</span>
<span class="t" style="left:707.7px;top:701.0px;font-size:21.33px;line-height:26px;transform:scaleX(1.015);color:#000;">seam D</span>
<span class="t" style="left:879.5px;top:706.1px;font-size:21.33px;line-height:26px;transform:scaleX(1.015);color:#000;font-weight:bold;">S &amp; D</span>
<span class="t" style="left:1021.0px;top:701.0px;font-size:21.33px;line-height:26px;transform:scaleX(1.015);color:#000;">C seam</span>
<span class="t" style="left:847.5px;top:739.9px;font-size:21.33px;line-height:26px;transform:scaleX(1.015);color:#000;">10-S x 10-D</span>
<span class="t" style="left:707.7px;top:769.2px;font-size:21.33px;line-height:26px;transform:scaleX(1.015);color:#000;">Length: 24</span>
<span class="t" style="left:846.8px;top:769.2px;font-size:21.33px;line-height:26px;transform:scaleX(1.015);color:#000;">End 1</span>
<span class="t" style="left:1020.5px;top:769.2px;font-size:21.33px;line-height:26px;transform:scaleX(1.015);color:#000;">End 1 Str: 2</span>
<svg style="left:790px;top:530px" width="180" height="215" fill="none"><path d="M16.300 9.600H91.600L95 30L159.400 169V196.600L155.300 205.300H79.400L76.200 195.300V185.200L13 46.200V17.800z" stroke="#000" stroke-width="1.100"/><path d="M108.500 156.500l13 5.500-11.500 6 3.500-6z" fill="#000"/></svg>
<div class="btn b2" style="left:165px;top:927px;width:157px;height:27px;"></div>
<span class="t" style="left:170.8px;top:932.5px;font-size:13.2px;line-height:16px;transform:scaleX(1.072);color:#333;">Nesting Parameters</span>
<svg style="left:301.05px;top:933.25px" width="14.500" height="14.500" viewBox="0 0 16 16"><path fill="#2a2a2a" fill-rule="evenodd" d="M6.86 2.52L7.05 0.46L8.95 0.46L9.14 2.52L11.07 3.32L12.66 1.99L14.01 3.34L12.68 4.93L13.48 6.86L15.54 7.05L15.54 8.95L13.48 9.14L12.68 11.07L14.01 12.66L12.66 14.01L11.07 12.68L9.14 13.48L8.95 15.54L7.05 15.54L6.86 13.48L4.93 12.68L3.34 14.01L1.99 12.66L3.32 11.07L2.52 9.14L0.46 8.95L0.46 7.05L2.52 6.86L3.32 4.93L1.99 3.34L3.34 1.99L4.93 3.32ZM8 5.3a2.7 2.7 0 1 0 .01 0z"/></svg>
<div class="btn b2" style="left:165px;top:958px;width:157px;height:27px;"></div>
<span class="t" style="left:182.0px;top:963.5px;font-size:13.2px;line-height:16px;transform:scaleX(1.077);color:#333;">Preset Materials</span>
<svg style="left:301.05px;top:964.25px" width="14.500" height="14.500" viewBox="0 0 16 16"><path fill="#2a2a2a" fill-rule="evenodd" d="M6.86 2.52L7.05 0.46L8.95 0.46L9.14 2.52L11.07 3.32L12.66 1.99L14.01 3.34L12.68 4.93L13.48 6.86L15.54 7.05L15.54 8.95L13.48 9.14L12.68 11.07L14.01 12.66L12.66 14.01L11.07 12.68L9.14 13.48L8.95 15.54L7.05 15.54L6.86 13.48L4.93 12.68L3.34 14.01L1.99 12.66L3.32 11.07L2.52 9.14L0.46 8.95L0.46 7.05L2.52 6.86L3.32 4.93L1.99 3.34L3.34 1.99L4.93 3.32ZM8 5.3a2.7 2.7 0 1 0 .01 0z"/></svg>
<div class="btn b2" style="left:165px;top:989px;width:157px;height:27px;"></div>
<span class="t" style="left:202.0px;top:994.5px;font-size:13.2px;line-height:16px;transform:scaleX(1.042);color:#333;">Edit Paths</span>
<div class="btn b2" style="left:325px;top:958px;width:138px;height:27px;"></div>
<span class="t" style="left:330.3px;top:963.5px;font-size:13.2px;line-height:16px;transform:scaleX(1.090);color:#333;">Controller Status</span>
<svg style="left:442.75px;top:964.25px" width="14.500" height="14.500" viewBox="0 0 16 16"><path fill="#2a2a2a" fill-rule="evenodd" d="M6.86 2.52L7.05 0.46L8.95 0.46L9.14 2.52L11.07 3.32L12.66 1.99L14.01 3.34L12.68 4.93L13.48 6.86L15.54 7.05L15.54 8.95L13.48 9.14L12.68 11.07L14.01 12.66L12.66 14.01L11.07 12.68L9.14 13.48L8.95 15.54L7.05 15.54L6.86 13.48L4.93 12.68L3.34 14.01L1.99 12.66L3.32 11.07L2.52 9.14L0.46 8.95L0.46 7.05L2.52 6.86L3.32 4.93L1.99 3.34L3.34 1.99L4.93 3.32ZM8 5.3a2.7 2.7 0 1 0 .01 0z"/></svg>
<div class="btn b2" style="left:325px;top:989px;width:138px;height:27px;"></div>
<span class="t" style="left:336.3px;top:994.5px;font-size:13.2px;line-height:16px;transform:scaleX(1.035);color:#333;">Display Options</span>
<svg style="left:442.75px;top:995.25px" width="14.500" height="14.500" viewBox="0 0 16 16"><path fill="#2a2a2a" fill-rule="evenodd" d="M6.86 2.52L7.05 0.46L8.95 0.46L9.14 2.52L11.07 3.32L12.66 1.99L14.01 3.34L12.68 4.93L13.48 6.86L15.54 7.05L15.54 8.95L13.48 9.14L12.68 11.07L14.01 12.66L12.66 14.01L11.07 12.68L9.14 13.48L8.95 15.54L7.05 15.54L6.86 13.48L4.93 12.68L3.34 14.01L1.99 12.66L3.32 11.07L2.52 9.14L0.46 8.95L0.46 7.05L2.52 6.86L3.32 4.93L1.99 3.34L3.34 1.99L4.93 3.32ZM8 5.3a2.7 2.7 0 1 0 .01 0z"/></svg>
<svg style="left:300px;top:995px" width="16" height="16" fill="none" stroke="#222" stroke-width="1.300"><rect x="2" y="2" width="11.500" height="11.500" rx="1"/><path d="M5 10.500l5.500-5.500" stroke-width="2"/></svg>
<div style="left:467px;top:923px;width:987px;height:96px;background:#b3d6d9;border-radius:3px 3px 0 0;box-shadow:0 0 2px rgba(215,240,240,.85)"></div>
<div style="left:470px;top:925px;width:107px;height:25px;background:#ffff6e;border-right:1px solid #a8a85a;box-shadow:0 1px 2px rgba(0,0,0,.3)"></div>
<svg style="left:472.0px;top:930px" width="16" height="16" fill="none"><circle cx="7.600" cy="8" r="6.600" stroke="#6d6d20" stroke-width="1.300"/></svg>
<span class="t" style="left:492.5px;top:929.0px;font-size:15px;line-height:18px;transform:scaleX(1.028);color:#111;">Layout</span>
<div style="left:579px;top:925px;width:107px;height:25px;background:#ffff6e;border-right:1px solid #a8a85a;box-shadow:0 1px 2px rgba(0,0,0,.3)"></div>
<svg style="left:581.0px;top:930px" width="16" height="16" fill="none"><circle cx="7.600" cy="8" r="6.600" stroke="#6d6d20" stroke-width="1.300"/></svg>
<span class="t" style="left:601.5px;top:929.0px;font-size:15px;line-height:18px;transform:scaleX(1.020);color:#111;">Sheet</span>
<div style="left:688px;top:925px;width:107px;height:25px;background:#ffff6e;border-right:1px solid #a8a85a;box-shadow:0 1px 2px rgba(0,0,0,.3)"></div>
<svg style="left:690.0px;top:930px" width="16" height="16" fill="none"><circle cx="7.600" cy="8" r="6.600" stroke="#6d6d20" stroke-width="1.300"/></svg>
<span class="t" style="left:710.5px;top:929.0px;font-size:15px;line-height:18px;transform:scaleX(1.012);color:#111;">Zoom</span>
<div style="left:797px;top:925px;width:107px;height:25px;background:#ffff6e;border-right:1px solid #a8a85a;box-shadow:0 1px 2px rgba(0,0,0,.3)"></div>
<svg style="left:799.0px;top:930px" width="16" height="16" fill="none"><circle cx="7.600" cy="8" r="6.600" stroke="#6d6d20" stroke-width="1.300"/></svg>
<span class="t" style="left:819.5px;top:929.0px;font-size:15px;line-height:18px;transform:scaleX(1.131);color:#111;">Rotate</span>
<div style="left:906px;top:925px;width:107px;height:25px;background:#ffff6e;border-right:1px solid #a8a85a;box-shadow:0 1px 2px rgba(0,0,0,.3)"></div>
<svg style="left:908.0px;top:930px" width="16" height="16" fill="none"><circle cx="7.600" cy="8" r="6.600" stroke="#6d6d20" stroke-width="1.300"/></svg>
<span class="t" style="left:928.5px;top:929.0px;font-size:15px;line-height:18px;transform:scaleX(1.033);color:#111;">Special</span>
<div style="left:1015px;top:925px;width:107px;height:25px;background:#ffff6e;border-right:1px solid #a8a85a;box-shadow:0 1px 2px rgba(0,0,0,.3)"></div>
<svg style="left:1017.0px;top:930px" width="16" height="16" fill="none"><circle cx="7.600" cy="8" r="6.600" stroke="#ed1c24" stroke-width="1.300"/><circle cx="7.600" cy="8" r="3.600" fill="#ed1c24"/></svg>
<span class="t" style="left:1037.5px;top:929.0px;font-size:15px;line-height:18px;transform:scaleX(0.964);color:#111;">Cut</span>
<div style="left:1124px;top:925px;width:107px;height:25px;background:#ffff6e;border-right:1px solid #a8a85a;box-shadow:0 1px 2px rgba(0,0,0,.3)"></div>
<svg style="left:1126.0px;top:930px" width="16" height="16" fill="none"><circle cx="7.600" cy="8" r="6.600" stroke="#6d6d20" stroke-width="1.300"/></svg>
<span class="t" style="left:1146.5px;top:929.0px;font-size:15px;line-height:18px;transform:scaleX(1.089);color:#111;">Justify</span>
<div style="left:1233px;top:925px;width:107px;height:25px;background:#ffff6e;border-right:1px solid #a8a85a;box-shadow:0 1px 2px rgba(0,0,0,.3)"></div>
<svg style="left:1235.0px;top:930px" width="16" height="16" fill="none"><circle cx="7.600" cy="8" r="6.600" stroke="#6d6d20" stroke-width="1.300"/></svg>
<span class="t" style="left:1255.5px;top:929.0px;font-size:15px;line-height:18px;transform:scaleX(0.987);color:#111;">Edit</span>
<div style="left:1342px;top:925px;width:109px;height:25px;background:#ffff6e;border-right:1px solid #a8a85a;box-shadow:0 1px 2px rgba(0,0,0,.3)"></div>
<svg style="left:1344.0px;top:930px" width="16" height="16" fill="none"><circle cx="7.600" cy="8" r="6.600" stroke="#6d6d20" stroke-width="1.300"/></svg>
<span class="t" style="left:1364.5px;top:929.0px;font-size:15px;line-height:18px;transform:scaleX(1.069);color:#111;">Sketch</span>
<div class="btn" style="left:470px;top:957px;width:107px;height:53.5px;"></div>
<span class="t" style="left:478.0px;top:965.3px;font-size:13.5px;line-height:16px;color:#444;">Seek</span>
<span class="t" style="left:478.0px;top:987.5px;font-size:13.5px;line-height:16px;color:#444;">Home</span>
<div style="left:555.5px;top:968px;width:19.5px;height:33px;background:#fff;border:1px solid #444"></div>
<span class="t" style="left:557.8px;top:975.5px;font-size:15px;line-height:18px;transform:scaleX(0.857);color:#444;">F1</span>
<div class="btn" style="left:586px;top:957px;width:107px;height:53.5px;"></div>
<span class="t" style="left:594.0px;top:965.3px;font-size:13.5px;line-height:16px;color:#444;">Current</span>
<span class="t" style="left:594.0px;top:987.5px;font-size:13.5px;line-height:16px;color:#444;">Torch</span>
<div style="left:671.5px;top:968px;width:19.5px;height:33px;background:#fff;border:1px solid #444"></div>
<span class="t" style="left:673.8px;top:975.5px;font-size:15px;line-height:18px;transform:scaleX(0.857);color:#444;">F2</span>
<div class="btn" style="left:702px;top:957px;width:107px;height:53.5px;"></div>
<span class="t" style="left:710.0px;top:965.3px;font-size:13.5px;line-height:16px;color:#444;">Print</span>
<span class="t" style="left:710.0px;top:987.5px;font-size:13.5px;line-height:16px;color:#444;">Labels</span>
<div style="left:787.5px;top:968px;width:19.5px;height:33px;background:#fff;border:1px solid #444"></div>
<span class="t" style="left:789.8px;top:975.5px;font-size:15px;line-height:18px;transform:scaleX(0.857);color:#444;">F3</span>
<div class="btn" style="left:818px;top:957px;width:107px;height:53.5px;"></div>
<span class="t" style="left:826.0px;top:965.3px;font-size:13.5px;line-height:16px;color:#444;">(F)lush</span>
<span class="t" style="left:826.0px;top:987.5px;font-size:13.5px;line-height:16px;color:#444;">Spoolers</span>
<div style="left:903.5px;top:968px;width:19.5px;height:33px;background:#fff;border:1px solid #444"></div>
<span class="t" style="left:905.8px;top:975.5px;font-size:15px;line-height:18px;transform:scaleX(0.857);color:#444;">F4</span>
<div class="btn" style="left:995px;top:957px;width:107px;height:53.5px;"></div>
<span class="t" style="left:1003.0px;top:965.3px;font-size:13.5px;line-height:16px;color:#444;">(J)og to</span>
<span class="t" style="left:1003.0px;top:987.5px;font-size:13.5px;line-height:16px;color:#444;">Cursor</span>
<div style="left:1080.5px;top:968px;width:19.5px;height:33px;background:#fff;border:1px solid #444"></div>
<span class="t" style="left:1082.8px;top:975.5px;font-size:15px;line-height:18px;transform:scaleX(0.857);color:#444;">F5</span>
<div class="btn" style="left:1111px;top:957px;width:107px;height:53.5px;"></div>
<span class="t" style="left:1119.0px;top:965.3px;font-size:13.5px;line-height:16px;color:#444;">Cut</span>
<span class="t" style="left:1119.0px;top:987.5px;font-size:13.5px;line-height:16px;color:#444;">Sheet</span>
<div style="left:1196.5px;top:968px;width:19.5px;height:33px;background:#fff;border:1px solid #444"></div>
<span class="t" style="left:1198.8px;top:975.5px;font-size:15px;line-height:18px;transform:scaleX(0.857);color:#444;">F6</span>
<div class="btn" style="left:1227px;top:957px;width:107px;height:53.5px;"></div>
<span class="t" style="left:1235.0px;top:965.3px;font-size:13.5px;line-height:16px;color:#444;">Cut One</span>
<span class="t" style="left:1235.0px;top:987.5px;font-size:13.5px;line-height:16px;color:#444;">Piece</span>
<div style="left:1312.5px;top:968px;width:19.5px;height:33px;background:#fff;border:1px solid #444"></div>
<span class="t" style="left:1314.8px;top:975.5px;font-size:15px;line-height:18px;transform:scaleX(0.857);color:#444;">F7</span>
<div class="btn" style="left:1343px;top:957px;width:107px;height:53.5px;"></div>
<span class="t" style="left:1351.0px;top:965.3px;font-size:13.5px;line-height:16px;color:#444;">E(x)it</span>
<span class="t" style="left:1351.0px;top:987.5px;font-size:13.5px;line-height:16px;color:#444;">Cutting</span>
<div style="left:1344px;top:983px;width:84.5px;height:3px;background:#fff;border-top:1px solid #555;border-bottom:1px solid #555"></div>
<div style="left:1428.5px;top:968px;width:19.5px;height:33px;background:#fff;border:1px solid #444"></div>
<span class="t" style="left:1430.8px;top:975.5px;font-size:15px;line-height:18px;transform:scaleX(0.857);color:#444;">F8</span>
<svg style="left:930px;top:954px" width="60" height="60" viewBox="0 0 60 60"><circle cx="30.100" cy="30.600" r="25" fill="#6f8587" opacity=".55"/><circle cx="30.100" cy="30.300" r="23.900" fill="#fffdf0"/>
<g fill="#383838"><path d="M29.200 7.600L48.200 26.900H10.200z"/><path d="M29.200 53L48.200 34.100H10.200z"/><rect x="27.200" y="26" width="3.800" height="9"/></g>
<g stroke="#fffdf0" stroke-width="1.3" fill="none"><path d="M17.900 26.600L26.900 16.200M31.300 15.300L41.700 26.600M24.300 26.600L27.200 22.900M31.500 22.300L34.700 26.600"/><path d="M17.900 34.400L26.900 44.800M31.300 45.700L41.700 34.400M24.300 34.400L27.200 38.100M31.500 38.700L34.700 34.400"/></g></svg>
<div style="left:1455px;top:925px;width:120px;height:21px;background:#fff"></div>
<div style="left:1457px;top:927px;width:116px;height:19px;background:#585858"></div>
<span class="t" style="left:1459.7px;top:926.8px;font-size:15px;line-height:18px;transform:scaleX(1.052);color:#fff;">Part Torch:</span>
<div style="left:1455px;top:945px;width:260px;height:37px;background:#fff"></div>
<div style="left:1461px;top:978px;width:168px;height:1px;background:#555"></div>
<div class="btn" style="left:1637.5px;top:947.5px;width:75px;height:32px;border-radius:2px"></div>
<span class="t" style="left:1656.7px;top:955.0px;font-size:14px;line-height:17px;transform:scaleX(1.060);color:#333;">All</span>
<svg style="left:1692px;top:956px" width="14" height="16" fill="none" stroke="#333" stroke-width="1.500"><path d="M5 3.500l4.200 4.300-4.200 4.300"/></svg>
<svg style="left:1619px;top:959px" width="12" height="8"><path d="M1 1h9.500l-4.750 5z" fill="#777"/></svg>
<div style="left:1455px;top:984px;width:69px;height:35px;background:#585858;border-radius:4px 0 0 4px"></div>
<span class="t" style="left:1459.7px;top:991.0px;font-size:16px;line-height:19px;transform:scaleX(0.896);color:#fff;">Bed:</span>
<div style="left:1523px;top:984px;width:192px;height:35px;background:#fff"></div>
<span class="t" style="left:1529.0px;top:990.2px;font-size:16px;line-height:19px;color:#111;">Default</span>
<div style="left:1529px;top:1015px;width:180px;height:1px;background:#555"></div>
<svg style="left:1699px;top:996px" width="12" height="8"><path d="M1 1h9.500l-4.750 5z" fill="#777"/></svg>
<div style="left:0px;top:1019px;width:1920px;height:18px;background:#565656"></div>
<span class="t" style="left:911.5px;top:1020.8px;font-size:13.5px;line-height:16px;transform:scaleX(1.034);color:#eee;">Reports Printed</span>
</body></html>
